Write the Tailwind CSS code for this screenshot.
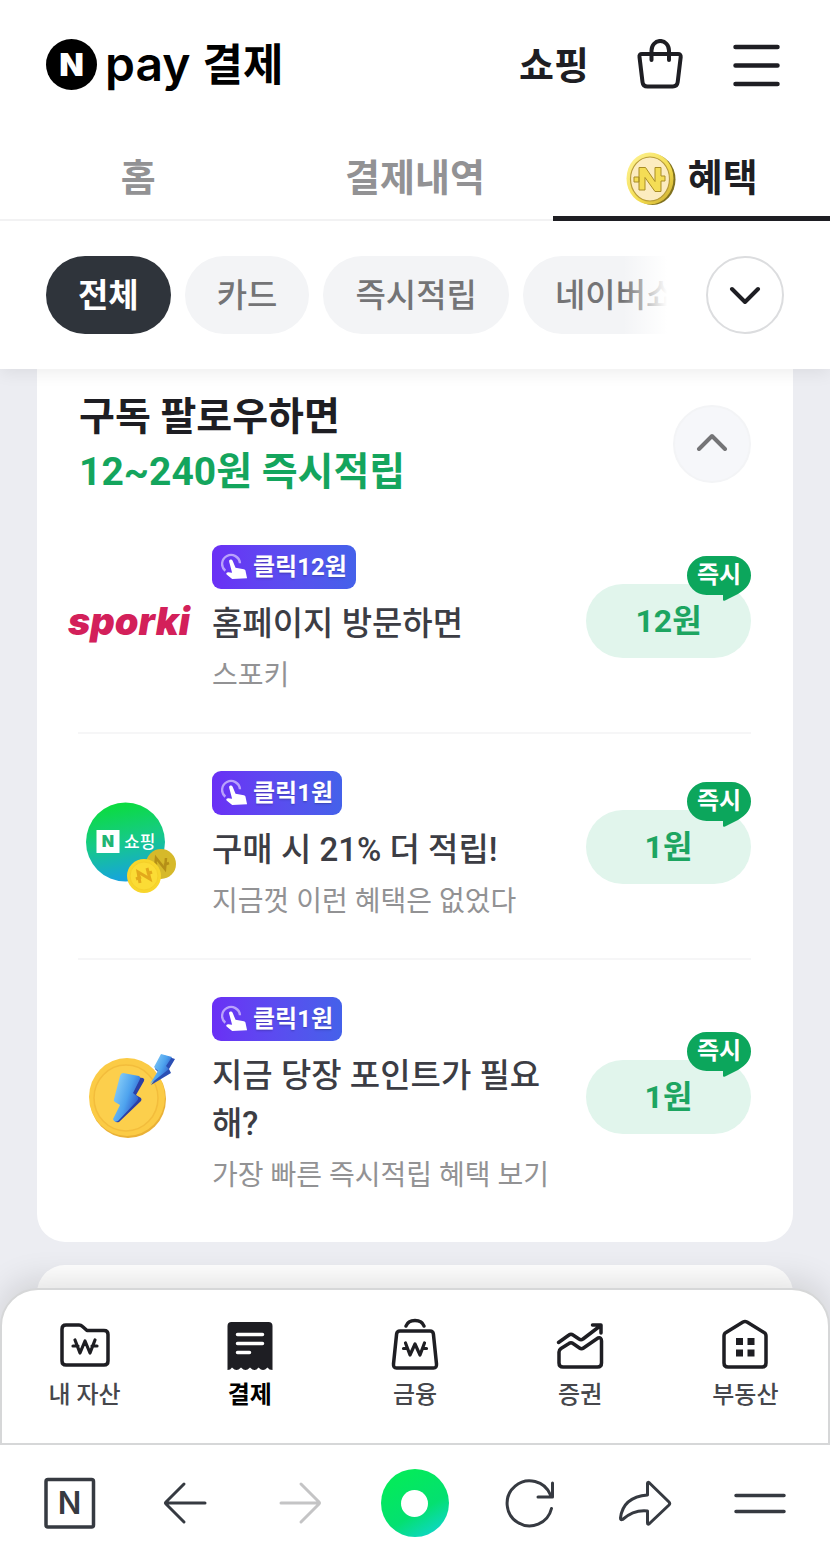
<!DOCTYPE html>
<html lang="ko">
<head>
    <meta charset="UTF-8">
    <meta name="viewport" content="width=device-width, initial-scale=1.0">
    <title>Npay 결제 - 혜택</title>
    <script src="https://cdn.jsdelivr.net/npm/@tailwindcss/browser@4"></script>
</head>
<body class="flex min-h-screen flex-col bg-[#ecedf2] font-[Roboto,'Noto_Sans_CJK_KR',sans-serif] text-[#1e1e23]">

    <!-- shared icons -->
    <svg class="hidden">
        <symbol id="tap" viewBox="0 0 26 26">
            <path d="M4 16.5A8.3 8.3 0 1 1 17.6 9.5" fill="none" stroke="#b9a2fb" stroke-width="2.2"/>
            <path d="M7.6 8.2q-.4-1.8 1.1-2.1 1.6-.3 2.2 1.3l2.6 6.4 7.8 1.2q1.1.2 1.4 1.3l1.500 7.200-13.800.6-5.200-4.200q-.8-1.300.4-1.900 1.400-.5 4.700.4z" fill="#fff"/>
        </symbol>
        <symbol id="bubble" viewBox="0 0 64 45">
            <path d="M19.500 0h25a19.500 19.500 0 0 1 19.500 19.500c0 10-8 16-16 20l-10 5q-2 1-2-1V39H19.500a19.500 19.500 0 0 1 0-39z" fill="#0ca65c"/>
        </symbol>
    </svg>

    <header class="sticky top-0 z-10 bg-white shadow-[0_4px_16px_rgba(0,0,0,0.07)]">
        <div class="flex h-[134px] items-center justify-between pr-[50px] pb-[6px] pl-[46px]">
            <a href="#" class="flex items-center text-black">
                <svg class="size-[51px]" viewBox="0 0 51 51">
                    <circle cx="25.500" cy="25.500" r="25.500"/>
                    <text x="25.500" y="37" text-anchor="middle" class="fill-white font-[Inter,sans-serif] text-[32px] font-black">N</text>
                </svg>
                <span class="ml-2 font-[Inter,sans-serif] text-[48px] leading-[52px] font-semibold">pay</span>
                <span class="ml-3 pt-1 text-[44px] leading-[52px] font-bold">결제</span>
            </a>
            <div class="flex items-center">
                <a href="#" class="pt-1 text-[38px] leading-[52px] font-bold">쇼핑</a>
                <button type="button" aria-label="장바구니" class="ml-12">
                    <svg class="h-[50px] w-[46px]" viewBox="0 0 46 50" fill="none" stroke="#1e1e23" stroke-width="4" stroke-linecap="round" stroke-linejoin="round">
                        <path d="M5 15h36q3 0 2.700 3l-3 25q-.6 4.500-5 4.500H10.500q-4.500 0-5-4.500l-3-25Q2 15 5 15z"/>
                        <path d="M14.500 21v-9.500a8.700 9.500 0 0 1 17.500 0V21"/>
                    </svg>
                </button>
                <button type="button" aria-label="메뉴" class="ml-[50px]">
                    <svg class="h-[50px] w-[47px]" viewBox="0 0 47 50" stroke="#1e1e23" stroke-width="4.500" stroke-linecap="round">
                        <path d="M2.500 8h42M2.500 26.500h42M2.500 45h42"/>
                    </svg>
                </button>
            </div>
        </div>

        <nav class="grid h-[87px] grid-cols-3 border-b-2 border-[#f2f2f3] text-[38px] font-bold">
            <a href="#" class="flex items-center justify-center pt-1 text-[#929294]">홈</a>
            <a href="#" class="flex items-center justify-center pt-1 text-[#929294]">결제내역</a>
            <a href="#" aria-current="page" class="relative flex items-center justify-center gap-3 pt-1">
                <svg class="h-[54px] w-[50px]" viewBox="0 0 50 54">
                    <defs>
                        <linearGradient id="rim" x1="0" y1="0" x2="1" y2="1">
                            <stop offset="0" stop-color="#fff59a"/>
                            <stop offset=".6" stop-color="#f3dc4e"/>
                            <stop offset="1" stop-color="#c9a92c"/>
                        </linearGradient>
                    </defs>
                    <ellipse cx="26.500" cy="27.500" rx="23" ry="25.500" fill="#80711f"/>
                    <ellipse cx="24" cy="26.500" rx="23.500" ry="26" fill="url(#rim)"/>
                    <ellipse cx="24" cy="27" rx="19.500" ry="22" fill="#fcecc0" stroke="#b89c3a" stroke-width="1.200"/>
                    <path d="M13 38V15.500h6.500l9.500 14V15.500h6V24h4v5h-4v10.500h-6l-10-14V38zM8 25h5v5H8z" fill="#f4dd55" stroke="#a98d25" stroke-linejoin="round"/>
                </svg>
                혜택
                <span class="absolute inset-x-0 -bottom-[2px] h-[5px] bg-[#1e1e23]"></span>
            </a>
        </nav>

        <div class="flex items-center gap-[39px] py-[35px] pr-[46px] pl-[46px]">
            <div class="relative flex min-w-0 flex-1 gap-[14px] overflow-hidden text-[33px] font-medium whitespace-nowrap text-[#747476]">
                <button type="button" class="h-[78px] shrink-0 rounded-full bg-[#2f343b] px-8 pt-[2px] font-bold text-white">전체</button>
                <button type="button" class="h-[78px] shrink-0 rounded-full bg-[#f3f4f6] px-8 pt-[2px]">카드</button>
                <button type="button" class="h-[78px] shrink-0 rounded-full bg-[#f3f4f6] px-8 pt-[2px]">즉시적립</button>
                <button type="button" class="h-[78px] shrink-0 rounded-full bg-[#f3f4f6] px-8 pt-[2px]">네이버쇼핑</button>
                <span class="absolute inset-y-0 right-0 w-11 bg-linear-to-r from-white/0 to-white"></span>
            </div>
            <button type="button" aria-label="전체 카테고리" class="flex size-[78px] shrink-0 items-center justify-center rounded-full border-2 border-[#dcdddf]">
                <svg class="h-[18px] w-[32px]" viewBox="0 0 32 18" fill="none" stroke="#1e1e23" stroke-width="4" stroke-linecap="round" stroke-linejoin="round">
                    <path d="M3 3l13 13L29 3"/>
                </svg>
            </button>
        </div>
    </header>

    <main class="flex-1 px-[37px]">
        <section class="rounded-b-[28px] bg-white pr-[42px] pb-[10px] pl-[41px]">
            <div class="flex items-start justify-between pt-[18px]">
                <h2 class="pt-[3px] pl-px text-[39px] leading-[55px] font-bold">구독 팔로우하면<br><span class="text-[#14a55d]">12~240원 즉시적립</span></h2>
                <button type="button" aria-label="접기" class="mt-[18px] flex size-[78px] items-center justify-center rounded-full border-2 border-[#f3f4f6] bg-[#f6f7fa] pb-1">
                    <svg class="h-[18px] w-[32px]" viewBox="0 0 32 18" fill="none" stroke="#747476" stroke-width="4" stroke-linecap="round" stroke-linejoin="round">
                        <path d="M3 16L16 3l13 13"/>
                    </svg>
                </button>
            </div>

            <ul class="mt-2 divide-y-2 divide-[#f6f6f7]">
                <li class="flex items-center pt-[37px] pb-[36px]">
                    <div class="-ml-2 flex w-[118px] shrink-0 justify-center">
                        <span class="font-[Inter,sans-serif] text-[38px] leading-[44px] font-black text-[#d3205a] italic">sporki</span>
                    </div>
                    <div class="ml-6 min-w-0 flex-1">
                        <span class="inline-flex h-[44px] items-center gap-1 rounded-[9px] bg-linear-to-r from-[#6a2ff5] to-[#4461ea] px-[9px] align-top text-[24px] font-bold text-white text-shadow-sm">
                            <svg class="size-[28px]"><use href="#tap"/></svg>클릭12원
                        </span>
                        <h3 class="mt-[11px] text-[33px] leading-[48px] font-medium text-[#3c3d44]">홈페이지 방문하면</h3>
                        <p class="mt-2 text-[28px] leading-[40px] text-[#929294]">스포키</p>
                    </div>
                    <button type="button" class="relative ml-6 h-[74px] w-[165px] shrink-0 rounded-full bg-[#e1f5ec] text-[32px] font-bold text-[#1da561]">
                        12원
                        <span class="absolute -top-[28px] right-0 h-[45px] w-[64px] text-[24px] leading-[38px] text-white">
                            <svg class="absolute inset-0 h-[45px] w-[64px]"><use href="#bubble"/></svg>
                            <span class="relative">즉시</span>
                        </span>
                    </button>
                </li>

                <li class="flex items-center pt-[37px] pb-[36px]">
                    <div class="-ml-2 flex w-[118px] shrink-0 justify-center">
                        <svg class="h-[94px] w-[94px]" viewBox="0 0 94 94">
                            <defs>
                                <linearGradient id="shop" x1=".5" y1="0" x2=".7" y2="1">
                                    <stop offset="0" stop-color="#0bdc3f"/>
                                    <stop offset=".45" stop-color="#16ca86"/>
                                    <stop offset="1" stop-color="#169fe8"/>
                                </linearGradient>
                            </defs>
                            <circle cx="43.500" cy="42" r="39.500" fill="url(#shop)"/>
                            <rect x="14.500" y="30" width="23" height="23" fill="#fff"/>
                            <text x="26" y="47" text-anchor="middle" class="fill-[#1fb573] font-[Inter,sans-serif] text-[16px] font-black">N</text>
                            <text x="42" y="48" class="fill-white text-[17px] font-medium">쇼핑</text>
                            <circle cx="79" cy="64" r="15" fill="#d6b92a"/>
                            <path d="M73 68l1-10 9 11 1-11M70 65l5-2M82 65l5-2" fill="none" stroke="#b58f17" stroke-width="2.500"/>
                            <circle cx="62" cy="76" r="17" fill="#f8d62c"/>
                            <circle cx="62" cy="76" r="14" fill="#fbdc35" stroke="#f5cf2a"/>
                            <path d="M58 83l-2-11 12 7-3-11M54 79l5-2M65 74l5-2" fill="none" stroke="#e3a91b" stroke-width="3"/>
                        </svg>
                    </div>
                    <div class="ml-6 min-w-0 flex-1">
                        <span class="inline-flex h-[44px] items-center gap-1 rounded-[9px] bg-linear-to-r from-[#6a2ff5] to-[#4461ea] px-[9px] align-top text-[24px] font-bold text-white text-shadow-sm">
                            <svg class="size-[28px]"><use href="#tap"/></svg>클릭1원
                        </span>
                        <h3 class="mt-[11px] text-[33px] leading-[48px] font-medium text-[#3c3d44]">구매 시 21% 더 적립!</h3>
                        <p class="mt-2 text-[28px] leading-[40px] text-[#929294]">지금껏 이런 혜택은 없었다</p>
                    </div>
                    <button type="button" class="relative ml-6 h-[74px] w-[165px] shrink-0 rounded-full bg-[#e1f5ec] text-[32px] font-bold text-[#1da561]">
                        1원
                        <span class="absolute -top-[28px] right-0 h-[45px] w-[64px] text-[24px] leading-[38px] text-white">
                            <svg class="absolute inset-0 h-[45px] w-[64px]"><use href="#bubble"/></svg>
                            <span class="relative">즉시</span>
                        </span>
                    </button>
                </li>

                <li class="flex items-center pt-[37px] pb-[36px]">
                    <div class="-ml-2 flex w-[118px] shrink-0 justify-center">
                        <svg class="h-[88px] w-[94px]" viewBox="0 0 94 88">
                            <defs>
                                <linearGradient id="bolt" x1="0" y1="0" x2="1" y2=".6">
                                    <stop offset="0" stop-color="#9bdcfb"/>
                                    <stop offset=".6" stop-color="#4ea3ee"/>
                                    <stop offset="1" stop-color="#2a4fc4"/>
                                </linearGradient>
                            </defs>
                            <ellipse cx="46" cy="46" rx="38" ry="39" fill="#eab136"/>
                            <ellipse cx="45" cy="44" rx="38" ry="39" fill="#fbcb45"/>
                            <ellipse cx="44" cy="45" rx="32" ry="33" fill="#fccf4c" stroke="#f3bd3c" stroke-width="1.500"/>
                            <path d="M45 23l16 2q2 1 1 3l-8 14 5 3q1 2 0 3L37 69q-3 1-4-1l7-16-4-2z" fill="#2b3fa6"/>
                            <path d="M41 20l16 3q2 1 1 3l-7 14 5 4q1 2-1 4L36 68q-4 2-5-2l7-14-5-3q-2-1-1-3l6-23q1-3 3-3z" fill="url(#bolt)"/>
                            <path d="M81 2l12 4-6 10 2 4-20 12 8-12-4-4z" fill="#2b4fb4"/>
                            <path d="M79 1l11 3-6 9 3 3-19 15 8-13-4-4z" fill="url(#bolt)"/>
                        </svg>
                    </div>
                    <div class="ml-6 min-w-0 flex-1">
                        <span class="inline-flex h-[44px] items-center gap-1 rounded-[9px] bg-linear-to-r from-[#6a2ff5] to-[#4461ea] px-[9px] align-top text-[24px] font-bold text-white text-shadow-sm">
                            <svg class="size-[28px]"><use href="#tap"/></svg>클릭1원
                        </span>
                        <h3 class="mt-[11px] text-[33px] leading-[48px] font-medium text-[#3c3d44]">지금 당장 포인트가 필요해?</h3>
                        <p class="mt-2 text-[28px] leading-[40px] text-[#929294]">가장 빠른 즉시적립 혜택 보기</p>
                    </div>
                    <button type="button" class="relative ml-6 h-[74px] w-[165px] shrink-0 rounded-full bg-[#e1f5ec] text-[32px] font-bold text-[#1da561]">
                        1원
                        <span class="absolute -top-[28px] right-0 h-[45px] w-[64px] text-[24px] leading-[38px] text-white">
                            <svg class="absolute inset-0 h-[45px] w-[64px]"><use href="#bubble"/></svg>
                            <span class="relative">즉시</span>
                        </span>
                    </button>
                </li>
            </ul>
        </section>

        <!-- next card, continues under the bottom bar -->
        <section class="mt-[23px] h-16 rounded-t-[28px] bg-white"></section>
    </main>

    <footer class="sticky bottom-0 z-10 -mt-[42px]">
        <nav class="grid grid-cols-5 rounded-t-[38px] border-2 border-[#d6d7d8] bg-white pt-[28px] pb-[30px] text-center text-[24px] leading-[36px] font-medium text-[#46474c] shadow-[0_-8px_32px_rgba(0,0,0,0.12)]">
            <a href="#" class="flex flex-col items-center gap-[7px]">
                <svg class="size-[52px]" viewBox="0 0 52 52" fill="none" stroke="#1e1e23" stroke-width="3.500" stroke-linecap="round" stroke-linejoin="round">
                    <path d="M3 11q0-4 4-4h13q2 0 3.500 1.500L28 12.500h17q4 0 4 4V43q0 4-4 4H7q-4 0-4-4z"/>
                    <path d="M16 22l5 13 5-12 5 12 5-13M14 28h5M33 28h5" stroke-width="3.200"/>
                </svg>
                내 자산
            </a>
            <a href="#" aria-current="page" class="flex flex-col items-center gap-[7px] font-bold text-black">
                <svg class="size-[52px]" viewBox="0 0 52 52">
                    <path d="M3.500 8q0-4 4-4h37q4 0 4 4v44q-3.500 0-5-2.500-2.500 2.500-4.500 2.500t-4.500-2.500Q32.500 52 30.500 52T26 49.500Q23.500 52 21.500 52T17 49.500Q14.500 52 12.500 52T8 49.500Q6.500 52 3.500 52z" fill="#1e1e23"/>
                    <path d="M13.500 16.500h25M13.500 25.500h25M13.500 34.500h12" stroke="#fff" stroke-width="3.500" stroke-linecap="round"/>
                </svg>
                결제
            </a>
            <a href="#" class="flex flex-col items-center gap-[7px]">
                <svg class="size-[52px]" viewBox="0 0 52 52" fill="none" stroke="#1e1e23" stroke-width="3.500" stroke-linecap="round" stroke-linejoin="round">
                    <path d="M17 8q2-5.500 9-5.500T35 8"/>
                    <path d="M11 13h30q3 0 3.400 3l3.100 30q.3 4-3 4h-37q-3.300 0-3-4l3.100-30Q8 13 11 13z"/>
                    <path d="M16.500 25l4.500 12 5-11 5 11 4.500-12M14.500 30.500h4M33.500 30.500h4" stroke-width="3.200"/>
                </svg>
                금융
            </a>
            <a href="#" class="flex flex-col items-center gap-[7px]">
                <svg class="size-[52px]" viewBox="0 0 52 52" fill="none" stroke="#1e1e23" stroke-width="3.500" stroke-linecap="round" stroke-linejoin="round">
                    <path d="M4.500 24.500L15 17q2-1.500 4 0l6 4q2 1.300 4 0L46 8M38.500 7H47v8"/>
                    <path d="M5 34q0-2 2-3.500l8-5q2-1.500 4 0l6.500 4.500q2 1.500 4 0L44 20q3.500-1 3.500 3v22q0 4-4 4H9q-4 0-4-4z"/>
                </svg>
                증권
            </a>
            <a href="#" class="flex flex-col items-center gap-[7px]">
                <svg class="size-[52px]" viewBox="0 0 52 52" fill="none" stroke="#1e1e23" stroke-width="3.500" stroke-linejoin="round">
                    <path d="M5 18q0-2.500 2-3.500L24 4q2-1 4 0l17 10.500q2 1 2 3.500v27q0 4-4 4H9q-4 0-4-4z"/>
                    <path d="M17 20h7v7h-7zM28.500 20h7v7h-7zM17 31.500h7v7h-7zM28.500 31.500h7v7h-7z" fill="#1e1e23" stroke="none"/>
                </svg>
                부동산
            </a>
        </nav>

        <div class="grid h-[116px] grid-cols-7 place-items-center bg-white px-3">
            <button type="button" aria-label="네이버 홈">
                <svg class="size-[54px]" viewBox="0 0 54 54">
                    <rect x="3" y="3.500" width="47.500" height="47.500" rx="2" fill="none" stroke="#363a41" stroke-width="3.500"/>
                    <text x="26.500" y="38" text-anchor="middle" class="fill-[#363a41] font-[Inter,sans-serif] text-[31px] font-semibold">N</text>
                </svg>
            </button>
            <button type="button" aria-label="뒤로">
                <svg class="size-[46px]" viewBox="0 0 46 46" fill="none" stroke="#363a41" stroke-width="3" stroke-linecap="round" stroke-linejoin="round">
                    <path d="M22 4L4 22q-1 1 0 2L22 42M4 23h39"/>
                </svg>
            </button>
            <button type="button" aria-label="앞으로" disabled>
                <svg class="size-[46px]" viewBox="0 0 46 46" fill="none" stroke="#c4c4c5" stroke-width="3" stroke-linecap="round" stroke-linejoin="round">
                    <path d="M24 4l18 18q1 1 0 2L24 42M4 23h38"/>
                </svg>
            </button>
            <button type="button" aria-label="그린닷" class="flex size-[68px] items-center justify-center rounded-full bg-linear-[150deg] from-[#04ea5c] from-20% via-[#04e070] via-60% to-[#12d3e4]">
                <span class="size-[27px] rounded-full bg-white"></span>
            </button>
            <button type="button" aria-label="새로고침">
                <svg class="size-[52px]" viewBox="0 0 52 52" fill="none" stroke="#363a41" stroke-width="3" stroke-linecap="round" stroke-linejoin="round">
                    <path d="M47.500 31.500a22.500 22.500 0 1 1-1-13.500M48.500 6v14H34"/>
                </svg>
            </button>
            <button type="button" aria-label="공유">
                <svg class="size-[54px]" viewBox="0 0 54 54" fill="none" stroke="#363a41" stroke-width="3" stroke-linecap="round" stroke-linejoin="round">
                    <path d="M29.500 7.500q0-2 2-.5L51 26q1.500 1.500 0 3L31.500 47.500q-2 1.500-2-.5V35Q16 33.500 4.500 43.500q-2 1-2-1.500Q5 21 29.500 19z"/>
                </svg>
            </button>
            <button type="button" aria-label="더보기">
                <svg class="h-[24px] w-[52px]" viewBox="0 0 52 24" stroke="#363a41" stroke-width="3.500" stroke-linecap="round">
                    <path d="M2 4.500h48M2 20.500h48"/>
                </svg>
            </button>
        </div>
    </footer>
</body>
</html>
